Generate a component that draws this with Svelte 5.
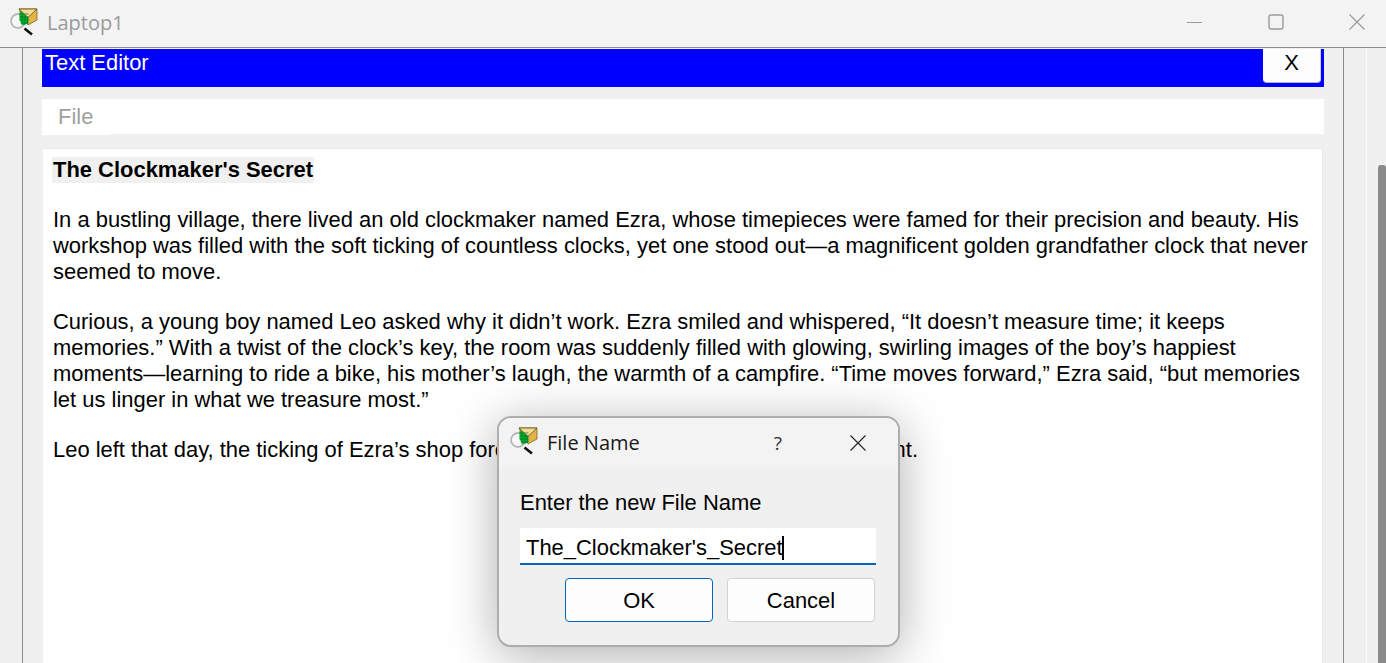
<script lang="ts">
    const paragraphs = [
        [
            "In a bustling village, there lived an old clockmaker named Ezra, whose timepieces were famed for their precision and beauty. His",
            "workshop was filled with the soft ticking of countless clocks, yet one stood out—a magnificent golden grandfather clock that never",
            "seemed to move.",
        ],
        [
            "Curious, a young boy named Leo asked why it didn’t work. Ezra smiled and whispered, “It doesn’t measure time; it keeps",
            "memories.” With a twist of the clock’s key, the room was suddenly filled with glowing, swirling images of the boy’s happiest",
            "moments—learning to ride a bike, his mother’s laugh, the warmth of a campfire. “Time moves forward,” Ezra said, “but memories",
            "let us linger in what we treasure most.”",
        ],
        [
            "Leo left that day, the ticking of Ezra’s shop forever echoing in his heart, a tender moment.",
        ],
    ];
</script>

{#snippet appIcon()}
    <svg class="app-icon" viewBox="0 0 28 28" width="28" height="28">
        <circle cx="8" cy="13" r="7" fill="#f8f8f8" stroke="#b8b8b8" stroke-width="1.8" />
        <path d="M14.5 20.5 L22 26.5" stroke="#111" stroke-width="2.6" />
        <path d="M9 1 H27 V12 L18 17 Z" fill="#e3b348" stroke="#6e5518" stroke-width="0.7" />
        <path d="M9 1 L18 9.5 L27 1 Z" fill="#f5dc96" stroke="#6e5518" stroke-width="0.9" />
        <path d="M9.5 3 L18.5 10 V15 L13 17.5 L9.5 12 Z" fill="#00c018" />
        <path d="M9.5 6 H18.5 M9.5 9 H18.5 M9.5 12 H18.5 M10.5 15 H18.5 M12 4.5 V17 M15 7 V16.5 M17.5 9 V15.5" stroke="#064" stroke-width="0.7" />
    </svg>
{/snippet}

<div class="window">
    <header class="titlebar">
        {@render appIcon()}
        <span class="title">Laptop1</span>
        <div class="controls">
            <svg viewBox="0 0 16 16" width="16" height="16"><path d="M0 8.5 H15" stroke="#9a9a9a" /></svg>
            <svg viewBox="0 0 16 16" width="16" height="16"><rect x="1" y="1" width="14" height="14" rx="2" fill="none" stroke="#9a9a9a" stroke-width="1.4" /></svg>
            <svg viewBox="0 0 16 16" width="16" height="16"><path d="M0.5 0.5 L15.5 15.5 M15.5 0.5 L0.5 15.5" stroke="#9a9a9a" stroke-width="1.2" /></svg>
        </div>
    </header>

    <div class="workspace">
        <div class="frame">
            <div class="editor">
                <div class="editor-head">
                    <span>Text Editor</span>
                    <button class="head-close">X</button>
                </div>
                <nav class="menubar"><span class="menu-item">File</span></nav>
                <div class="doc">
                    <p class="doc-title"><span>The Clockmaker's Secret</span></p>
                    {#each paragraphs as lines}
                        <p>
                            {#each lines as line}
                                <span class="line">{line}</span>
                            {/each}
                        </p>
                    {/each}
                </div>
            </div>
        </div>
        <div class="gutter"></div>
        <div class="scrolltrack"><div class="thumb"></div></div>
    </div>

    <div class="dialog">
        <div class="dialog-title">
            {@render appIcon()}
            <span class="dialog-name">File Name</span>
            <span class="help">?</span>
            <svg viewBox="0 0 16 16" width="16" height="16"><path d="M0.5 0.5 L15.5 15.5 M15.5 0.5 L0.5 15.5" stroke="#222" stroke-width="1.1" /></svg>
        </div>
        <div class="dialog-body">
            <div class="prompt">Enter the new File Name</div>
            <div class="field">The_Clockmaker's_Secret<i class="caret"></i></div>
            <div class="actions">
                <button class="btn primary">OK</button>
                <button class="btn">Cancel</button>
            </div>
        </div>
    </div>
</div>

<style>
    :global(body) {
        margin: 0;
        overflow: hidden;
    }

    .window {
        position: relative;
        width: 1386px;
        height: 663px;
        overflow: hidden;
        display: flex;
        flex-direction: column;
        background: #f0f0f0;
        font-family: "Liberation Sans", Arial, sans-serif;
        font-size: 21.94px;
        color: #000;
    }

    .titlebar {
        height: 47px;
        flex: none;
        display: flex;
        align-items: center;
        padding-left: 10px;
        background: #f3f3f3;
        border-bottom: 1px solid #8c8c8c;
        box-sizing: content-box;
    }

    .app-icon {
        flex: none;
        margin-top: -3px;
    }

    .title {
        margin: -2px 0 0 9px;
        color: #9a9a9a;
        font-family: "Open Sans", "Noto Sans", sans-serif;
        font-size: 20px;
    }

    .controls {
        margin-left: auto;
        display: flex;
        gap: 65px;
        padding-right: 21px;
        margin-top: -4px;
    }

    .workspace {
        flex: 1;
        min-height: 0;
        display: flex;
    }

    .frame {
        margin-left: 22px;
        width: 1322px;
        box-sizing: border-box;
        border-left: 1px solid #8c8c8c;
        border-right: 1px solid #8c8c8c;
        padding: 1px 19px 0 19px;
    }

    .editor {
        display: flex;
        flex-direction: column;
        height: 100%;
    }

    .editor-head {
        height: 38px;
        flex: none;
        background: #0000ff;
        color: #fff;
        display: flex;
        justify-content: space-between;
        align-items: flex-start;
        padding: 0 3px;
        line-height: 28px;
    }

    .head-close {
        width: 58px;
        height: 34px;
        padding: 0 0 5px;
        background: #fdfdfd;
        border: none;
        border-bottom: 1px solid #b5b5b5;
        border-right: 1px solid #d0d0d0;
        border-radius: 0 0 4px 4px;
        font: inherit;
        color: #000;
    }

    .menubar {
        margin-top: 12px;
        height: 35px;
        flex: none;
        background: #fff;
    }

    .menu-item {
        display: inline-block;
        width: 68px;
        height: 36px;
        box-sizing: border-box;
        padding-left: 16px;
        background: #fff;
        line-height: 36px;
        color: #a0a0a0;
    }

    .doc {
        margin: 14px 1px 0 1px;
        flex: 1;
        background: #fff;
        padding: 8px 10px;
        line-height: 26px;
        border-top: 1px solid #e8e8e8;
        border-right: 1px solid #e8e8e8;
        white-space: nowrap;
        overflow: hidden;
    }

    .doc p {
        margin: 0 0 24px;
    }

    .doc .doc-title {
        font-weight: 700;
    }

    .doc-title span {
        display: inline-block;
        margin-left: -1px;
        padding: 0 1px;
        background: #f0f0f0;
    }

    .line {
        display: block;
    }

    .gutter {
        width: 23px;
        flex: none;
        box-sizing: border-box;
        border-right: 1px solid #fafafa;
    }

    .scrolltrack {
        flex: 1;
        padding: 117px 0 0 11px;
    }

    .thumb {
        width: 8px;
        height: 100%;
        background: #8a8a8a;
        border-radius: 3px 3px 0 0;
    }

    /* modal floats over the document */
    .dialog {
        position: absolute;
        left: 497px;
        top: 416px;
        width: 403px;
        height: 231px;
        box-sizing: border-box;
        display: flex;
        flex-direction: column;
        background: #f0f0f0;
        border: 2px solid #adadad;
        border-radius: 14px;
        box-shadow: 0 8px 50px rgba(0, 0, 0, 0.32);
        overflow: hidden;
    }

    .dialog-title {
        height: 49px;
        flex: none;
        display: flex;
        align-items: center;
        padding: 0 32px 0 11px;
        background: #f3f3f3;
    }

    .dialog-name {
        margin-left: 9px;
        flex: 1;
        font-family: "Open Sans", "Noto Sans", sans-serif;
        font-size: 20px;
        color: #1a1a1a;
    }

    .help {
        margin-right: 68px;
        font-family: "Open Sans", "Noto Sans", sans-serif;
        font-size: 19px;
        color: #333;
    }

    .dialog-body {
        display: flex;
        flex-direction: column;
        padding: 23px 22px 0 21px;
    }

    .prompt {
        line-height: 26px;
        margin-bottom: 12px;
    }

    .field {
        height: 37px;
        box-sizing: border-box;
        padding: 5px 6px 0;
        background: #fff;
        border-bottom: 2px solid #0067c0;
        display: flex;
        align-items: center;
    }

    .caret {
        width: 2px;
        height: 24px;
        margin-left: -1px;
        background: #000;
    }

    .actions {
        margin-top: 13px;
        display: flex;
        justify-content: flex-end;
        gap: 14px;
        padding-right: 1px;
    }

    .btn {
        width: 148px;
        height: 44px;
        padding: 2px 0 0;
        background: #fdfdfd;
        border: 1px solid #d0d0d0;
        border-radius: 4px;
        font: inherit;
        color: #000;
    }

    .btn.primary {
        border-color: #0067c0;
    }
</style>
